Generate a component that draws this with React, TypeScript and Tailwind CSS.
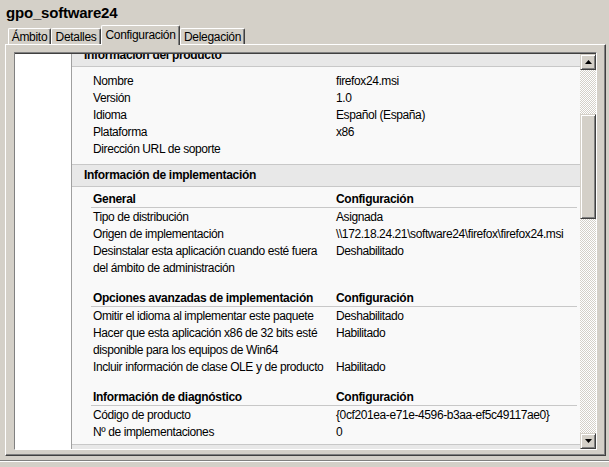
const btn3d =
  "border border-t-[#d4d0c8] border-l-[#d4d0c8] border-r-[#404040] border-b-[#404040] bg-[#d4d0c8] shadow-[inset_1px_1px_#ffffff,inset_-1px_-1px_#808080]"

const track =
  "bg-[repeating-conic-gradient(#d4d0c8_0%_25%,#ffffff_0%_50%)] bg-[length:2px_2px]"

const tabs = [
  { label: "Ámbito", w: "w-[43px]" },
  { label: "Detalles", w: "w-[50px]" },
  { label: "Configuración", w: "w-[79px]", active: true },
  { label: "Delegación", w: "w-[65px]" },
]

type Row = { label: string; value?: string }

const productRows: Row[] = [
  { label: "Nombre", value: "firefox24.msi" },
  { label: "Versión", value: "1.0" },
  { label: "Idioma", value: "Español (España)" },
  { label: "Plataforma", value: "x86" },
  { label: "Dirección URL de soporte" },
]

const groups: { title: string; mt: string; rows: Row[] }[] = [
  {
    title: "General",
    mt: "mt-[3px]",
    rows: [
      { label: "Tipo de distribución", value: "Asignada" },
      {
        label: "Origen de implementación",
        value: "\\\\172.18.24.21\\software24\\firefox\\firefox24.msi",
      },
      { label: "Desinstalar esta aplicación cuando esté fuera", value: "Deshabilitado" },
      { label: "del ámbito de administración" },
    ],
  },
  {
    title: "Opciones avanzadas de implementación",
    mt: "mt-[13px]",
    rows: [
      { label: "Omitir el idioma al implementar este paquete", value: "Deshabilitado" },
      { label: "Hacer que esta aplicación x86 de 32 bits esté", value: "Habilitado" },
      { label: "disponible para los equipos de Win64" },
      { label: "Incluir información de clase OLE y de producto", value: "Habilitado" },
    ],
  },
  {
    title: "Información de diagnóstico",
    mt: "mt-[13px]",
    rows: [
      { label: "Código de producto", value: "{0cf201ea-e71e-4596-b3aa-ef5c49117ae0}" },
      { label: "Nº de implementaciones", value: "0" },
    ],
  },
]

function Band({ title, className = "" }: { title: string; className?: string }) {
  return (
    <div
      className={`h-[23px] shrink-0 border-y border-[#c8c8c8] bg-[#e8e8e8] pl-[12px] text-[12px] font-bold leading-[20px] tracking-[-0.3px] ${className}`}
    >
      {title}
    </div>
  )
}

function DataRow({ row }: { row: Row }) {
  return (
    <div className="flex h-[17px] shrink-0 pt-[1px] text-[12px] leading-[17px] tracking-[-0.4px]">
      <div className="w-[264px] shrink-0 pl-[21px] whitespace-nowrap">{row.label}</div>
      <div className="whitespace-nowrap">{row.value}</div>
    </div>
  )
}

function Arrow({ up }: { up?: boolean }) {
  return (
    <svg width="7" height="4" viewBox="0 0 7 4">
      <path d={up ? "M3.5 0 L7 4 L0 4 Z" : "M0 0 L7 0 L3.5 4 Z"} fill="#000" />
    </svg>
  )
}

export default function App() {
  return (
    <div className="h-[467px] w-[609px] overflow-hidden bg-[#d4d0c8] font-['Liberation_Sans',Arial,sans-serif] text-black">
      {/* título */}
      <div className="h-[25px] pl-[6px] pt-[4px] text-[15px] font-bold leading-[18px] tracking-[-0.2px]">
        gpo_software24
      </div>

      {/* pestañas */}
      <div className="relative z-10 flex h-[20px] items-end pl-[8px]">
        {tabs.map((t) =>
          t.active ? (
            <div
              key={t.label}
              className={`${t.w} flex h-[20px] shrink-0 items-start justify-center rounded-t-[2px] border-l border-t border-r border-l-white border-t-white border-r-[#404040] bg-[#d4d0c8] pt-[1px] text-[12px] leading-[16px] tracking-[-0.3px] shadow-[inset_-1px_0_#808080]`}
            >
              {t.label}
            </div>
          ) : (
            <div
              key={t.label}
              className={`${t.w} mb-[1px] flex h-[16px] shrink-0 items-center justify-center rounded-t-[2px] border-l border-t border-r border-l-white border-t-white border-r-[#404040] pt-[1px] text-[12px] leading-[15px] tracking-[-0.3px] shadow-[inset_-1px_0_#808080]`}
            >
              {t.label}
            </div>
          )
        )}
      </div>

      {/* panel de la pestaña */}
      <div className="-mt-[1px] ml-[5px] h-[412px] w-[601px] border border-l-white border-t-white border-r-[#404040] border-b-[#404040] px-[8px] pt-[7px] shadow-[inset_-1px_-1px_#808080]">
        <div className="flex h-[398px] border border-t-[#808080] border-l-[#808080] border-r-white border-b-white shadow-[inset_1px_1px_#404040]">
          {/* columna izquierda */}
          <div className="mt-[1px] w-[57px] shrink-0 border-r border-[#a0a0a0] bg-white" />

          {/* contenido */}
          <div className="mt-[1px] flex flex-1 flex-col overflow-hidden bg-[#f9f9f9]">
            <Band title="Información del producto" className="-mt-[10px]" />
            <div className="mt-[5px] flex flex-col">
              {productRows.map((r) => (
                <DataRow key={r.label} row={r} />
              ))}
            </div>

            <Band title="Información de implementación" className="mt-[7px]" />

            {groups.map((g) => (
              <div key={g.title} className={`${g.mt} flex flex-col`}>
                <div className="ml-[19px] mr-[3px] flex h-[18px] border-b border-[#c8c8c8] pt-[1px] text-[12px] font-bold leading-[17px] tracking-[-0.3px]">
                  <div className="w-[245px] shrink-0 pl-[2px] whitespace-nowrap">{g.title}</div>
                  <div>Configuración</div>
                </div>
                {g.rows.map((r) => (
                  <DataRow key={r.label} row={r} />
                ))}
              </div>
            ))}

            <Band title="" className="mt-[4px]" />
          </div>

          {/* barra de desplazamiento */}
          <div className="mt-[1px] flex w-[16px] shrink-0 flex-col">
            <div className={`${btn3d} flex h-[16px] shrink-0 items-center justify-center`}>
              <Arrow up />
            </div>
            <div className={`${track} h-[44px] shrink-0`} />
            <div className={`${btn3d} h-[105px] shrink-0`} />
            <div className={`${track} flex-1`} />
            <div className={`${btn3d} flex h-[16px] shrink-0 items-center justify-center`}>
              <Arrow />
            </div>
          </div>
        </div>
      </div>

      {/* borde inferior de la ventana */}
      <div className="mt-[4px] border-t border-[#808080]" />
      <div className="border-t border-white" />
    </div>
  )
}
